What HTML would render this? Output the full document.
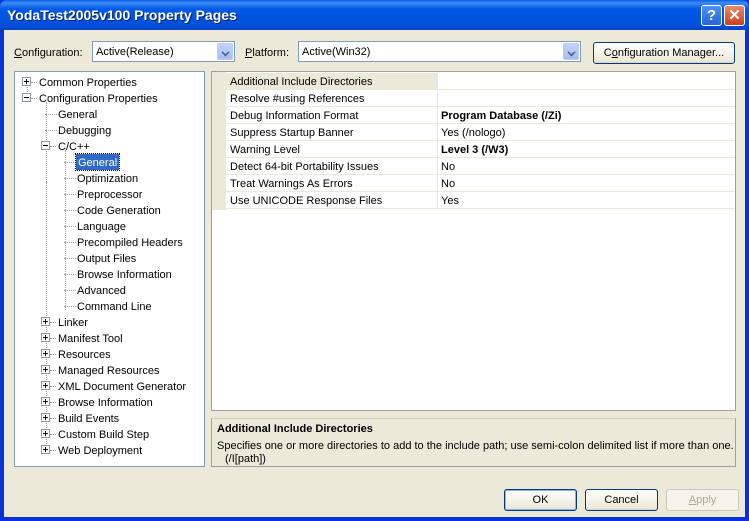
<!DOCTYPE html>
<html><head><style>
*{margin:0;padding:0;box-sizing:border-box}
body{width:749px;height:521px;overflow:hidden;font-family:"Liberation Sans",sans-serif;font-size:11px;color:#000;background:#0831d9;position:relative}
.a{position:absolute;white-space:nowrap}
#title{left:0;top:0;width:749px;height:30px;background:linear-gradient(#0a5fe6 0%,#3d8cf5 10%,#0058e6 30%,#0052dc 80%,#0143c4 100%);border-radius:7px 7px 0 0}
#title span{position:absolute;left:7px;top:7px;color:#fff;font-size:14px;font-weight:bold;text-shadow:1px 1px #0a1e6e}
#body{left:4px;top:30px;width:741px;height:487px;background:#ece9d8}
.combo{background:#fff;border:1px solid #7f9db9;height:21px}
.combo .t{position:absolute;left:3px;top:4px}
.dd{position:absolute;right:1px;top:1px;width:16px;height:17px;background:linear-gradient(#c1d3fb,#a6bff0);border-radius:2px;border:1px solid #b9cdf6}
.dd:after{content:"";position:absolute;left:4px;top:5px;width:5px;height:5px;border-right:2px solid #4d6185;border-bottom:2px solid #4d6185;transform:rotate(45deg) scale(.8)}
.btn{border:1px solid #003c74;border-radius:3px;background:linear-gradient(#fff,#ece9d8 90%,#d6d0c5);text-align:center;line-height:21px}
.tree{background:#fff;border:1px solid #7f9db9}
.ti{position:absolute;height:16px;line-height:18px}
.pb{position:absolute;width:9px;height:9px;border:1px solid #8c9cab;background:#fff}
.pb:before{content:"";position:absolute;left:1px;top:3px;width:5px;height:1px;background:#000}
.pb.p:after{content:"";position:absolute;left:3px;top:1px;width:1px;height:5px;background:#000}
.vl{position:absolute;border-left:1px dotted #a0a0a0;width:0}
.hl{position:absolute;border-top:1px dotted #a0a0a0;height:0}
.row{position:absolute;left:14px;width:509px;height:17px;border-bottom:1px solid #ece9d8;line-height:18px}
.row .n{position:absolute;left:4px}
.row .v{position:absolute;left:211px;border-left:1px solid #ece9d8;padding-left:3px;height:16px;width:300px}
</style></head><body>
<div id="title" class="a"><span>YodaTest2005v100 Property Pages</span>
<div class="a" style="left:701px;top:5px;width:21px;height:21px;border:1px solid #fff;border-radius:3px;background:linear-gradient(#4e8ff5,#2763dc);color:#fff;font-weight:bold;font-size:15px;text-align:center;line-height:19px">?</div>
<div class="a" style="left:724px;top:5px;width:21px;height:21px;border:1px solid #fff;border-radius:3px;background:linear-gradient(#e88a6c,#c9401c);color:#fff;font-weight:bold;font-size:15px;text-align:center;line-height:19px">✕</div>
</div>
<div id="body" class="a"></div>
<div class="a" style="left:14px;top:47px"><u>C</u>onfiguration:</div>
<div class="a combo" style="left:92px;top:41px;width:143px"><span class="t">Active(Release)</span><div class="dd"></div></div>
<div class="a" style="left:245px;top:47px"><u>P</u>latform:</div>
<div class="a combo" style="left:298px;top:41px;width:283px"><span class="t">Active(Win32)</span><div class="dd"></div></div>
<div class="a btn" style="left:593px;top:42px;width:142px;height:22px;line-height:21px">C<u>o</u>nfiguration Manager...</div>

<div class="a tree" style="left:14px;top:71px;width:191px;height:396px">
<div class="vl" style="left:12px;top:12px;height:16px"></div>
<div class="vl" style="left:31px;top:30px;height:80px"></div>
<div class="vl" style="left:31px;top:110px;height:272px"></div>
<div class="vl" style="left:50px;top:78px;height:160px"></div>
</div>
<div class="a" style="left:14px;top:71px;width:191px;height:396px">
<div class="pb p" style="left:8px;top:6px"></div><div class="hl" style="left:17px;top:11px;width:6px"></div><div class="ti" style="left:25px;top:3px">Common Properties</div>
<div class="pb" style="left:8px;top:22px"></div><div class="hl" style="left:17px;top:27px;width:6px"></div><div class="ti" style="left:25px;top:19px">Configuration Properties</div>
<div class="hl" style="left:31px;top:43px;width:12px"></div><div class="ti" style="left:44px;top:35px">General</div>
<div class="hl" style="left:31px;top:59px;width:12px"></div><div class="ti" style="left:44px;top:51px">Debugging</div>
<div class="pb" style="left:27px;top:70px"></div><div class="hl" style="left:36px;top:75px;width:6px"></div><div class="ti" style="left:44px;top:67px">C/C++</div>
<div class="hl" style="left:50px;top:91px;width:12px"></div><div class="ti" style="left:62px;top:83px;background:#316ac5;color:#fff;padding:0 2px;outline:1px dotted #000">General</div>
<div class="hl" style="left:50px;top:107px;width:12px"></div><div class="ti" style="left:63px;top:99px">Optimization</div>
<div class="hl" style="left:50px;top:123px;width:12px"></div><div class="ti" style="left:63px;top:115px">Preprocessor</div>
<div class="hl" style="left:50px;top:139px;width:12px"></div><div class="ti" style="left:63px;top:131px">Code Generation</div>
<div class="hl" style="left:50px;top:155px;width:12px"></div><div class="ti" style="left:63px;top:147px">Language</div>
<div class="hl" style="left:50px;top:171px;width:12px"></div><div class="ti" style="left:63px;top:163px">Precompiled Headers</div>
<div class="hl" style="left:50px;top:187px;width:12px"></div><div class="ti" style="left:63px;top:179px">Output Files</div>
<div class="hl" style="left:50px;top:203px;width:12px"></div><div class="ti" style="left:63px;top:195px">Browse Information</div>
<div class="hl" style="left:50px;top:219px;width:12px"></div><div class="ti" style="left:63px;top:211px">Advanced</div>
<div class="hl" style="left:50px;top:235px;width:12px"></div><div class="ti" style="left:63px;top:227px">Command Line</div>
<div class="pb p" style="left:27px;top:246px"></div><div class="hl" style="left:36px;top:251px;width:6px"></div><div class="ti" style="left:44px;top:243px">Linker</div>
<div class="pb p" style="left:27px;top:262px"></div><div class="hl" style="left:36px;top:267px;width:6px"></div><div class="ti" style="left:44px;top:259px">Manifest Tool</div>
<div class="pb p" style="left:27px;top:278px"></div><div class="hl" style="left:36px;top:283px;width:6px"></div><div class="ti" style="left:44px;top:275px">Resources</div>
<div class="pb p" style="left:27px;top:294px"></div><div class="hl" style="left:36px;top:299px;width:6px"></div><div class="ti" style="left:44px;top:291px">Managed Resources</div>
<div class="pb p" style="left:27px;top:310px"></div><div class="hl" style="left:36px;top:315px;width:6px"></div><div class="ti" style="left:44px;top:307px">XML Document Generator</div>
<div class="pb p" style="left:27px;top:326px"></div><div class="hl" style="left:36px;top:331px;width:6px"></div><div class="ti" style="left:44px;top:323px">Browse Information</div>
<div class="pb p" style="left:27px;top:342px"></div><div class="hl" style="left:36px;top:347px;width:6px"></div><div class="ti" style="left:44px;top:339px">Build Events</div>
<div class="pb p" style="left:27px;top:358px"></div><div class="hl" style="left:36px;top:363px;width:6px"></div><div class="ti" style="left:44px;top:355px">Custom Build Step</div>
<div class="pb p" style="left:27px;top:374px"></div><div class="hl" style="left:36px;top:379px;width:6px"></div><div class="ti" style="left:44px;top:371px">Web Deployment</div>
</div>

<div class="a" style="left:211px;top:71px;width:525px;height:340px;background:#fff;border:1px solid #a0a0a0">
<div class="a" style="left:0;top:0;width:14px;height:138px;background:#ece9d8"></div>
<div class="row" style="top:1px"><div class="n" style="left:0;padding-left:4px;width:211px;background:#ece9d8;height:16px">Additional Include Directories</div><div class="v"></div></div>
<div class="row" style="top:18px"><span class="n">Resolve #using References</span><div class="v"></div></div>
<div class="row" style="top:35px"><span class="n">Debug Information Format</span><div class="v"><b>Program Database (/Zi)</b></div></div>
<div class="row" style="top:52px"><span class="n">Suppress Startup Banner</span><div class="v">Yes (/nologo)</div></div>
<div class="row" style="top:69px"><span class="n">Warning Level</span><div class="v"><b>Level 3 (/W3)</b></div></div>
<div class="row" style="top:86px"><span class="n">Detect 64-bit Portability Issues</span><div class="v">No</div></div>
<div class="row" style="top:103px"><span class="n">Treat Warnings As Errors</span><div class="v">No</div></div>
<div class="row" style="top:120px"><span class="n">Use UNICODE Response Files</span><div class="v">Yes</div></div>
</div>
<div class="a" style="left:211px;top:418px;width:525px;height:49px;border:1px solid #a0a0a0;border-top-color:#d0cdc0">
<div class="a" style="left:5px;top:4px;font-weight:bold">Additional Include Directories</div>
<div class="a" style="left:5px;top:21px">Specifies one or more directories to add to the include path; use semi-colon delimited list if more than one.</div>
<div class="a" style="left:13px;top:34px">(/I[path])</div>
</div>

<div class="a btn" style="left:504px;top:489px;width:73px;height:22px;border-color:#003c74;box-shadow:inset 0 0 0 1px #8cb4f2">OK</div>
<div class="a btn" style="left:585px;top:489px;width:73px;height:22px">Cancel</div>
<div class="a btn" style="left:666px;top:489px;width:73px;height:22px;border-color:#c9c7ba;background:#f5f4ea;color:#aca899"><u>A</u>pply</div>
</body></html>
